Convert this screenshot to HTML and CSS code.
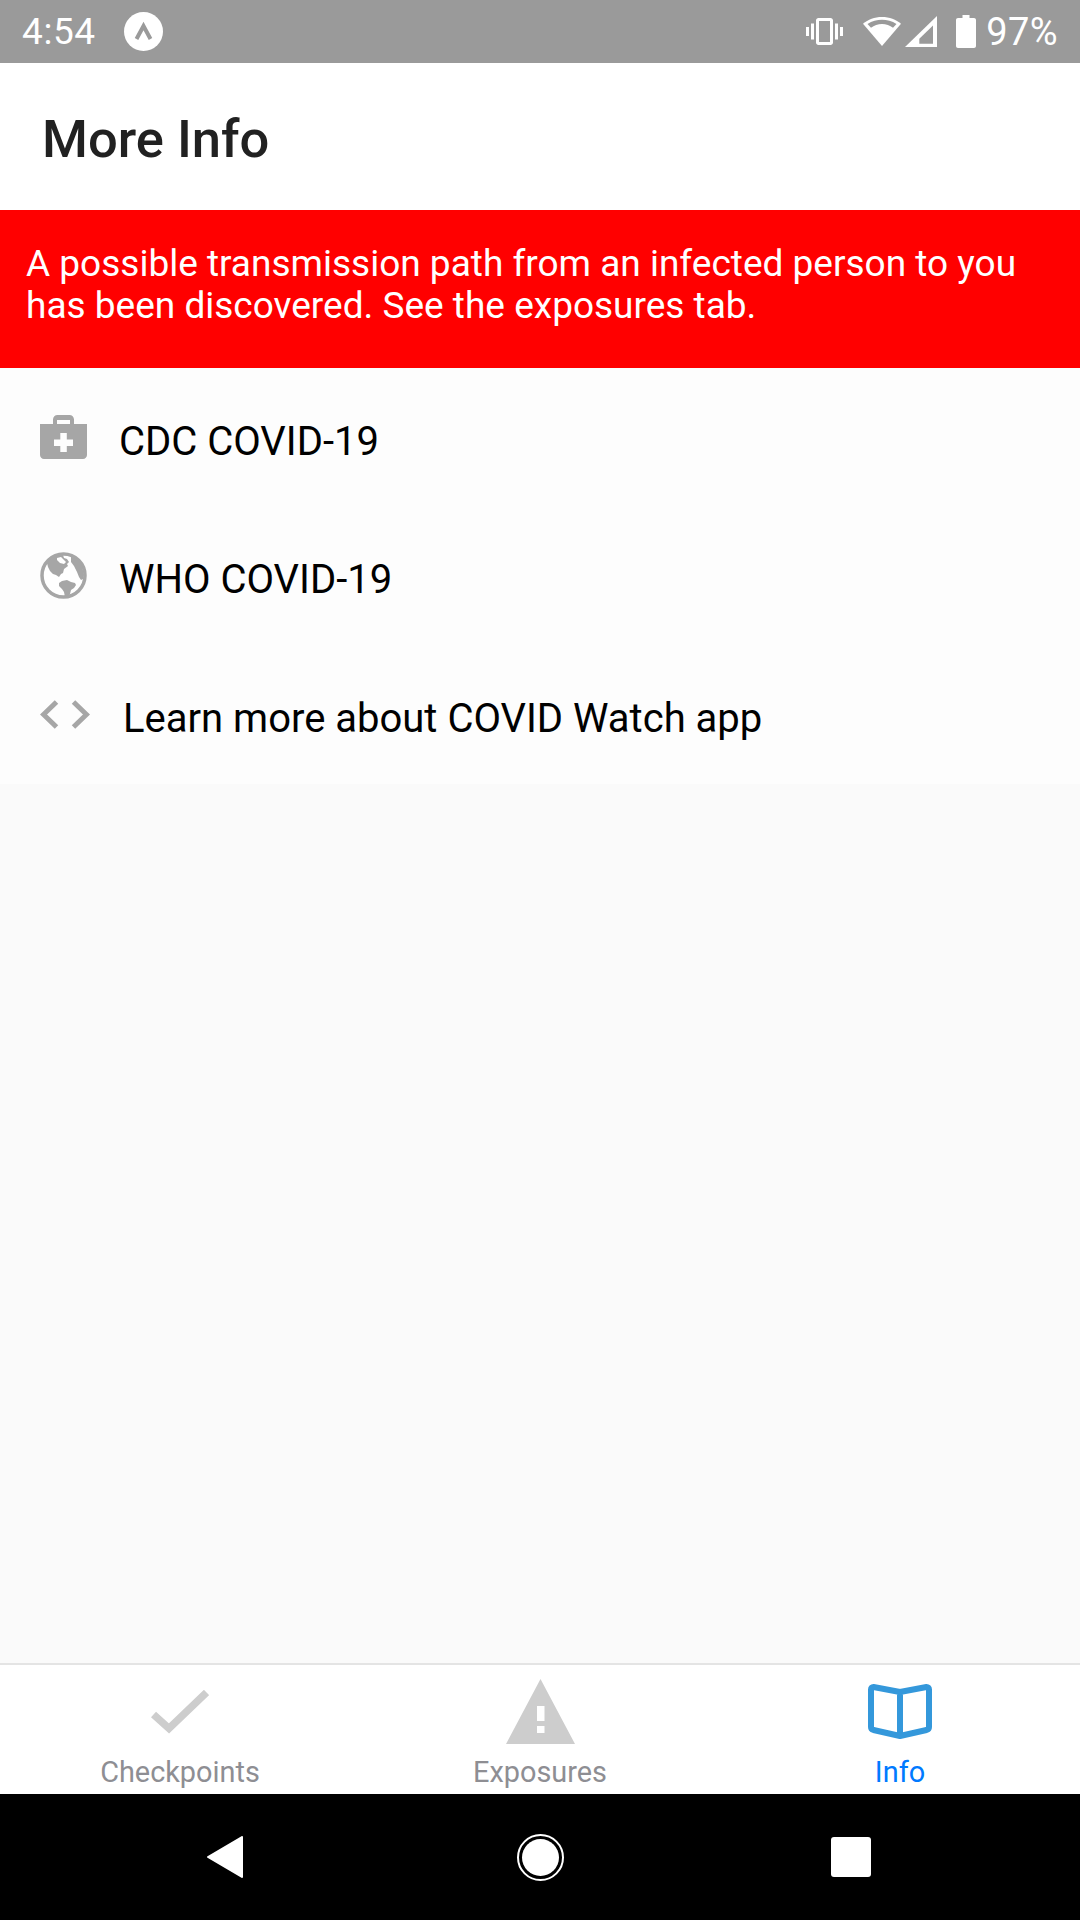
FILE: index.html
```html
<!DOCTYPE html>
<html lang="en">
<head>
<meta charset="utf-8">
<title>More Info</title>
<link rel="stylesheet" href="styles.css">
</head>
<body>
<div class="screen">
  <div class="status">
    <div class="status-left">
      <span class="time">4:54</span>
      <span class="expo"><svg viewBox="0 0 39 39" width="39" height="39"><circle cx="19.500" cy="19.500" r="19.500" fill="#fff"/><path d="M12.500 27 19.500 14l7 13" fill="none" stroke="#9a9a9a" stroke-width="4"/></svg></span>
    </div>
    <div class="status-right">
      <svg class="i-vib" viewBox="0 0 37 27" width="37" height="27"><path fill="#fff" d="M0 9h3v9H0zM5 5.500h3v16H5zM29 5.500h3v16h-3zM34 9h3v9h-3zM12.500 0h12c1.400 0 2.500 1.100 2.500 2.500v22c0 1.400-1.100 2.500-2.500 2.500h-12c-1.400 0-2.500-1.100-2.500-2.500v-22C10 1.100 11.100 0 12.500 0zM13 3v21h11V3z" fill-rule="evenodd"/></svg>
      <svg class="i-wifi" viewBox="0 0 38 29" width="38" height="29"><path fill="#fff" d="M19 0C11.500 0 5 2.600 0 6.800L19 29 38 6.800C33 2.600 26.500 0 19 0z"/><path fill="#9a9a9a" d="M4.500 7C9 4 14 2.700 19 2.700S29 4 33.500 7L30 10.800C27 8.300 23 7 19 7S11 8.300 8 10.800z"/></svg>
      <svg class="i-sig" viewBox="0 0 32 31" width="32" height="31"><path fill="#fff" d="M32 0 0 31h32z"/><path fill="#9a9a9a" d="M28 9.500 14.300 22.800v5H28z"/></svg>
      <svg class="i-bat" viewBox="0 0 20 33" width="20" height="33"><path fill="#fff" d="M6.500 0h7v3H18c1.100 0 2 .9 2 2v26c0 1.100-.9 2-2 2H2c-1.100 0-2-.9-2-2V5c0-1.100.9-2 2-2h4.500z"/></svg>
      <span class="pct">97%</span>
    </div>
  </div>

  <header class="title-bar"><h1 class="title">More Info</h1></header>

  <div class="alert">A possible transmission path from an infected person to you has been discovered. See the exposures tab.</div>

  <ul class="links">
    <li class="link">
      <svg class="link-icon" viewBox="0 0 47 44" width="47" height="44"><path fill="#a6a6a6" fill-rule="evenodd" d="M13 9V4.500C13 2 15 0 17.500 0h12C32 0 34 2 34 4.500V9h13v31c0 2.200-1.800 4-4 4H4c-2.200 0-4-1.800-4-4V9zM17 9h13V5H17zM20.300 18v6.500H14V31h6.300v6h6.500v-6H33v-6.500h-6.200V18z"/></svg>
      <span class="link-text">CDC COVID-19</span>
    </li>
    <li class="link">
      <svg class="link-icon" viewBox="0 0 47 47" width="47" height="47"><circle cx="23.500" cy="23.500" r="21.500" fill="#fff" stroke="#a6a6a6" stroke-width="3.500"/><path fill="#a6a6a6" d="M10 8 16 4l7-1 1 3 3 1 2 3-2 2 1 2-4 3-1 4-2 1-2 3-3-2-3-1-3-3-2-4-1-4zM31 4l6 3 5 7 2 9-1 4-2 1-2-3-2-5-3-6-3-4z"/><path fill="#fff" d="M17 6l4-1 3 3 2 2-2 2-4-1-3-3z"/><path fill="#a6a6a6" d="M19 31l3-2 5-1 4 2 4 1 1 2-2 3-3 2-1 4-1 2-4 1-1-5-2-3-3-3z"/></svg>
      <span class="link-text">WHO COVID-19</span>
    </li>
    <li class="link link-code">
      <svg class="link-icon" viewBox="0 0 50 29" width="50" height="29"><path fill="none" stroke="#a6a6a6" stroke-width="5" d="M16.500 2 3.500 14.500l13 12.500M33.500 2l13 12.500-13 12.500"/></svg>
      <span class="link-text">Learn more about COVID Watch app</span>
    </li>
  </ul>

  <div class="spacer"></div>

  <nav class="tabs">
    <div class="tab">
      <span class="tab-icon"><svg viewBox="0 0 58 44" width="58" height="44"><path fill="none" stroke="#cdcdcd" stroke-width="7.500" d="M2.500 24.500 18 38.500 55.500 2.500"/></svg></span>
      <span class="tab-label">Checkpoints</span>
    </div>
    <div class="tab">
      <span class="tab-icon"><svg viewBox="0 0 69 65" width="69" height="65"><path fill="#cdcdcd" fill-rule="evenodd" d="M34.500 0 69 65H0zM31 27v15h7.500V27zM31 47v7h7.500v-7z"/></svg></span>
      <span class="tab-label">Exposures</span>
    </div>
    <div class="tab tab-active">
      <span class="tab-icon"><svg viewBox="0 0 64 55" width="64" height="55"><path fill="none" stroke="#3498db" stroke-width="6" stroke-linejoin="round" d="M32 8 5.500 3C4 3 3 4 3 5.500V43c0 1.500 1 2.500 2.500 3L32 52l26.500-6c1.500-.5 2.500-1.500 2.500-3V5.500C61 4 60 3 58.500 3zM32 8v44"/></svg></span>
      <span class="tab-label">Info</span>
    </div>
  </nav>

  <div class="android-nav">
    <svg viewBox="0 0 36 42" width="36" height="42"><path fill="#fff" stroke="#fff" stroke-width="2" stroke-linejoin="round" d="M35 1v40L1 21z"/></svg>
    <svg class="home" viewBox="0 0 47 47" width="47" height="47"><circle cx="23.500" cy="23.500" r="22.500" fill="none" stroke="#fff" stroke-width="2"/><circle cx="23.500" cy="23.500" r="18.500" fill="#fff"/></svg>
    <span class="recent"></span>
  </div>
</div>
</body>
</html>
```
FILE: styles.css
```css
* { box-sizing: border-box; }
html, body { margin: 0; padding: 0; }
body { font-family: Roboto, "Liberation Sans", sans-serif; background: #fafafa; }
.screen { width: 1080px; height: 1920px; display: flex; flex-direction: column; overflow: hidden; }

.status { height: 63px; background: #9a9a9a; color: #fff; display: flex; justify-content: space-between; align-items: center; padding: 0 22px; }
.status-left { display: flex; align-items: center; }
.time { font-size: 37px; font-weight: 450; letter-spacing: 0.6px; }
.expo { display: flex; margin-left: 28px; }
.status-right { display: flex; align-items: center; }
.i-vib { margin-right: 20px; }
.i-wifi { margin-right: 4px; }
.i-sig { margin-right: 19px; }
.i-bat { margin-right: 10px; }
.pct { font-size: 38px; font-weight: 450; letter-spacing: 0.4px; }

.title-bar { height: 147px; background: #fff; display: flex; align-items: center; padding: 5px 0 0 42px; }
.title { margin: 0; font-size: 52.5px; font-weight: 500; color: #212121; }

.alert { height: 158px; background: #ff0000; color: #fff; font-size: 37px; line-height: 42px; padding: 33px 26px 0; }

.links { list-style: none; margin: 0; padding: 0; background: #fdfdfd; display: grid; grid-template-rows: repeat(3, 1fr); height: 416px; }
.link { display: flex; align-items: center; padding-left: 40px; }
.link-text { font-size: 40px; color: #000; margin: 8px 0 0 32px; }
.link-code .link-text { margin-left: 33px; }

.spacer { flex: 1; background: #fafafa; }

.tabs { height: 131px; background: #fff; border-top: 2px solid #e4e4e4; display: grid; grid-template-columns: repeat(3, 1fr); }
.tab { display: flex; flex-direction: column; align-items: center; padding-top: 14px; }
.tab-icon { height: 65px; display: flex; align-items: center; }
.tab-label { font-size: 28.875px; line-height: 40px; margin-top: 8px; color: #8e8e93; }
.tab-active .tab-label { color: #007aff; }

.android-nav { height: 126px; background: #000; display: flex; align-items: center; justify-content: space-between; padding: 0 209px 0 207px; }
.home { margin-left: 6px; }
.recent { width: 40px; height: 40px; background: #fff; border-radius: 3px; }
```
